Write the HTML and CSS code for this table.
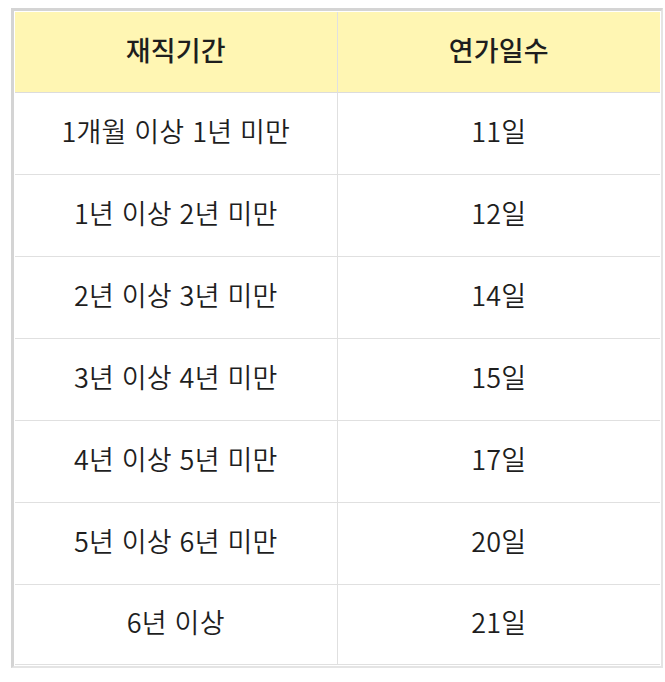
FILE: index.html
```html
<!DOCTYPE html>
<html lang="ko">
<head>
<meta charset="utf-8">
<link rel="stylesheet" href="styles.css">
</head>
<body>
<table class="leave">
  <thead>
    <tr><th>재직기간</th><th>연가일수</th></tr>
  </thead>
  <tbody>
    <tr><td>1개월 이상 1년 미만</td><td>11일</td></tr>
    <tr><td>1년 이상 2년 미만</td><td>12일</td></tr>
    <tr><td>2년 이상 3년 미만</td><td>14일</td></tr>
    <tr><td>3년 이상 4년 미만</td><td>15일</td></tr>
    <tr><td>4년 이상 5년 미만</td><td>17일</td></tr>
    <tr><td>5년 이상 6년 미만</td><td>20일</td></tr>
    <tr class="last"><td>6년 이상</td><td>21일</td></tr>
  </tbody>
</table>
</body>
</html>
```
FILE: styles.css
```css
html, body {
  margin: 0;
  background: #fff;
}
body {
  padding: 8px 0 0 11px;
  font-family: "Noto Sans CJK KR", "Noto Sans", sans-serif;
  color: #1e1e1e;
}
.leave {
  width: 652px;
  border-collapse: separate;
  border-spacing: 0;
  border-style: solid;
  border-width: 3px 2px 2px 3px;
  border-color: #d4d4d4 #e4e4e4 #e4e4e4 #d4d4d4;
  padding: 1px;
  table-layout: fixed;
}
.leave th,
.leave td {
  height: 75px;
  padding: 0 0 6px;
  text-align: center;
  vertical-align: middle;
  font-size: 27px;
  letter-spacing: 0.2px;
  border-bottom: 1px solid #e0e0e0;
  border-right: 1px solid #e0e0e0;
}
.leave th {
  background: #fff6b3;
  font-weight: 500;
  font-size: 27px;
  height: 74px;
  border-bottom-color: #dcdcdc;
}
.leave tr > :last-child {
  border-right: none;
}
.leave td {
  font-weight: 350;
}
.leave tr.last td {
  height: 73px;
}
```
